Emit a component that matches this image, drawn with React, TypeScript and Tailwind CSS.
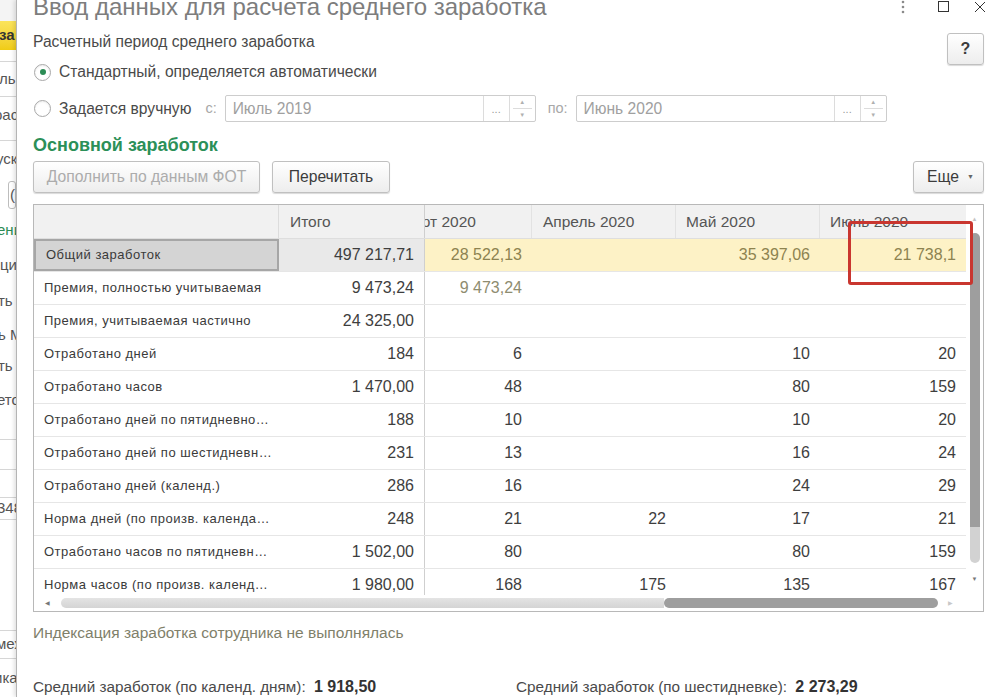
import React from 'react'

type Row = {
  label: string
  total: string
  mar: string
  apr: string
  may: string
  jun: string
}

const rows: Row[] = [
  { label: 'Общий заработок', total: '497 217,71', mar: '28 522,13', apr: '', may: '35 397,06', jun: '21 738,1' },
  { label: 'Премия, полностью учитываемая', total: '9 473,24', mar: '9 473,24', apr: '', may: '', jun: '' },
  { label: 'Премия, учитываемая частично', total: '24 325,00', mar: '', apr: '', may: '', jun: '' },
  { label: 'Отработано дней', total: '184', mar: '6', apr: '', may: '10', jun: '20' },
  { label: 'Отработано часов', total: '1 470,00', mar: '48', apr: '', may: '80', jun: '159' },
  { label: 'Отработано дней по пятидневно…', total: '188', mar: '10', apr: '', may: '10', jun: '20' },
  { label: 'Отработано дней по шестидневн…', total: '231', mar: '13', apr: '', may: '16', jun: '24' },
  { label: 'Отработано дней (календ.)', total: '286', mar: '16', apr: '', may: '24', jun: '29' },
  { label: 'Норма дней (по произв. календа…', total: '248', mar: '21', apr: '22', may: '17', jun: '21' },
  { label: 'Отработано часов по пятидневн…', total: '1 502,00', mar: '80', apr: '', may: '80', jun: '159' },
  { label: 'Норма часов (по произв. календ…', total: '1 980,00', mar: '168', apr: '175', may: '135', jun: '167' },
]

const cols = 'grid grid-cols-[245px_146px_107px_144px_144px_146px]'

function Radio({ checked }: { checked?: boolean }) {
  return (
    <span className="w-[17px] h-[17px] rounded-full border border-[#a8a8a8] bg-white flex items-center justify-center shadow-[inset_0_1px_2px_rgba(0,0,0,0.08)]">
      {checked && <span className="w-[6px] h-[6px] rounded-full bg-[#2c8c55]" />}
    </span>
  )
}

function PeriodInput({ value }: { value: string }) {
  return (
    <div className="flex h-[27px] w-[311px] border border-[#cdcdcd] rounded-[2px] bg-white">
      <div className="flex-1 flex items-center pl-[7px] text-[15.6px] text-[#a0a0a0]">{value}</div>
      <div className="w-[26px] border-l border-[#dcdcdc] flex items-end justify-center pb-[6px] text-[11px] leading-none text-[#9a9a9a]">...</div>
      <div className="w-[26px] border-l border-[#dcdcdc] flex flex-col">
        <div className="flex-1 flex items-center justify-center text-[6px] text-[#b0b0b0]">▲</div>
        <div className="h-px mx-[3px] bg-[#dcdcdc]" />
        <div className="flex-1 flex items-center justify-center text-[6px] text-[#b0b0b0]">▼</div>
      </div>
    </div>
  )
}

function Btn({ children, disabled, className }: { children: React.ReactNode; disabled?: boolean; className?: string }) {
  return (
    <div
      className={`h-[32px] flex items-center justify-center border border-[#c0c0c0] rounded-[3px] bg-gradient-to-b from-white to-[#ededed] shadow-[0_1px_1px_rgba(0,0,0,0.15)] text-[15.7px] ${
        disabled ? 'text-[#acacac]' : 'text-[#3c3c3c]'
      } ${className ?? ''}`}
    >
      {children}
    </div>
  )
}

function BackStrip() {
  return (
    <div className="w-[16px] shrink-0 overflow-hidden bg-white text-[15px] text-[#555] whitespace-nowrap flex flex-col">
      <div className="h-[21px] bg-[#f4f4f4]" />
      <div className="h-[29px] bg-gradient-to-b from-[#fbe45a] to-[#f0cc12] font-bold text-[#333] flex items-center -ml-[1px]">за</div>
      <div className="h-[12px] border-b border-[#d6d6d6]" />
      <div className="h-[35px] flex items-center -ml-[1px] border-b border-[#d6d6d6]">ль</div>
      <div className="h-[38px] flex items-center -ml-[6px]">рас</div>
      <div className="h-[6px] border-b border-[#d6d6d6]" />
      <div className="h-[38px] flex items-center -ml-[4px]">уск</div>
      <div className="h-[34px] flex items-center pl-[8px]">
        <div className="h-[28px] w-[20px] border border-[#bdbdbd] rounded-[3px] pl-[1px] flex items-center text-[#555]">(</div>
      </div>
      <div className="h-[36px] flex items-center -ml-[3px] text-[#2c8c55]">ени</div>
      <div className="h-[35px] flex items-center">ци</div>
      <div className="h-[36px] flex items-center -ml-[2px]">ть</div>
      <div className="h-[32px] flex items-center -ml-[2px]">ь М</div>
      <div className="h-[31px] flex items-center -ml-[2px]">ть :</div>
      <div className="h-[36px] flex items-center -ml-[3px]">ето</div>
      <div className="h-[22px] border-b border-[#d6d6d6]" />
      <div className="h-[30px] border-b border-[#d6d6d6]" />
      <div className="h-[28px] border-b border-[#d6d6d6]" />
      <div className="h-[22px] flex items-center -ml-[3px] border-b border-[#d6d6d6]">348</div>
      <div className="h-[112px] border-b border-[#d6d6d6]" />
      <div className="h-[28px] flex items-center -ml-[4px] border-b border-[#d6d6d6]">меж</div>
      <div className="h-[38px] flex items-center -ml-[6px]">ика</div>
      <div className="flex-1" />
    </div>
  )
}

export default function App() {
  return (
    <div className="w-[999px] h-[697px] overflow-hidden flex bg-white font-['Liberation_Sans',Arial,sans-serif] text-[#4a4a4a]">
      <BackStrip />
      <div className="flex-1 border-l border-[#b4b4b4] shadow-[-2px_0_4px_rgba(0,0,0,0.12)] pl-[16px] pr-[15px] flex flex-col">
        {/* title */}
        <div className="h-[20px] flex items-start justify-between">
          <div className="text-[24px] leading-[24px] -mt-[5px] text-[#7d7d7d] whitespace-nowrap">Ввод данных для расчета среднего заработка</div>
          <div className="flex items-start text-[#555] pt-[1px]">
            <svg width="4" height="14" viewBox="0 0 4 14" className="mr-[33px] -mt-[1px]">
              <circle cx="2" cy="2" r="1.3" fill="#8a8a8a" />
              <circle cx="2" cy="7" r="1.3" fill="#8a8a8a" />
              <circle cx="2" cy="12" r="1.3" fill="#8a8a8a" />
            </svg>
            <svg width="12" height="12" viewBox="0 0 12 12" className="mr-[24px]">
              <rect x="0.5" y="0.5" width="10" height="10" fill="none" stroke="#333" strokeWidth="1" />
            </svg>
            <svg width="12" height="12" viewBox="0 0 12 12" className="mr-[-2px]">
              <path d="M1 1 L11 11 M11 1 L1 11" stroke="#333" strokeWidth="1" />
            </svg>
          </div>
        </div>

        {/* period label + help */}
        <div className="mt-[13px] h-[18px] flex items-start justify-between">
          <div className="text-[15.6px] leading-[18px]">Расчетный период среднего заработка</div>
          <Btn className="w-[37px] font-bold text-[16px] shrink-0">?</Btn>
        </div>

        <div className="mt-[12px] h-[18px] flex items-center gap-[8px] pl-[1px]">
          <Radio checked />
          <span className="text-[15.6px]">Стандартный, определяется автоматически</span>
        </div>

        <div className="mt-[14px] h-[27px] flex items-center pl-[1px]">
          <Radio />
          <span className="text-[15.6px] ml-[8px]">Задается вручную</span>
          <span className="text-[14.5px] text-[#a8a8a8] ml-[14px] mr-[8px]">с:</span>
          <PeriodInput value="Июль 2019" />
          <span className="text-[14.5px] text-[#a8a8a8] ml-[12px] mr-[8px]">по:</span>
          <PeriodInput value="Июнь 2020" />
        </div>

        <div className="mt-[12px] h-[22px] text-[18px] leading-[22px] font-bold text-[#2b9058]">Основной заработок</div>

        <div className="mt-[5px] flex items-center">
          <Btn disabled className="w-[227px]">Дополнить по данным ФОТ</Btn>
          <Btn className="w-[118px] ml-[12px]">Перечитать</Btn>
          <div className="flex-1" />
          <Btn className="w-[71px] pl-[4px]">
            Еще <span className="text-[7px] ml-[8px] text-[#666]">▼</span>
          </Btn>
        </div>

        {/* table */}
        <div className="mt-[11px] relative border border-[#b8b8b8] h-[408px] flex flex-col">
          <div className="flex h-[390px]">
            <div className="w-[932px] flex flex-col">
              <div className={`${cols} h-[34px] bg-[#f1f1f1] border-b border-[#dedede] text-[15.5px] text-[#555]`}>
                <div className="border-r border-[#dcdcdc]" />
                <div className="flex items-center pl-[11px] border-r border-[#cfcfcf]">Итого</div>
                <div className="flex items-center overflow-hidden border-r border-[#e2e2e2]">
                  <span className="-ml-[25px] whitespace-nowrap">Март 2020</span>
                </div>
                <div className="flex items-center pl-[11px] border-r border-[#e2e2e2]">Апрель 2020</div>
                <div className="flex items-center pl-[10px] border-r border-[#e2e2e2]">Май 2020</div>
                <div className="flex items-center pl-[10px]">Июнь 2020</div>
              </div>
              <div className="flex-1 overflow-hidden">
                {rows.map((r, i) => {
                  const first = i === 0
                  const val = 'flex items-center justify-end pr-[10px] text-[16px]'
                  const hl = first ? 'bg-[#fdf2c6] text-[#8d8350]' : 'text-[#3e3e3e]'
                  return (
                    <div key={i} className={`${cols} h-[33px] border-b border-[#e6e6e6]`}>
                      <div
                        className={`flex items-center pl-[10px] text-[13px] tracking-[0.5px] whitespace-nowrap overflow-hidden ${
                          first ? 'bg-[#d4d4d4] border-2 border-[#a6a6a6] text-[#3a3a3a]' : 'text-[#3a3a3a]'
                        }`}
                      >
                        {r.label}
                      </div>
                      <div className={`${val} border-r border-[#cfcfcf] ${first ? 'bg-[#e9e9e9] text-[#3e3e3e]' : 'text-[#3e3e3e]'}`}>{r.total}</div>
                      <div className={`${val} ${first ? hl : i === 1 ? 'text-[#8e8c70]' : 'text-[#3e3e3e]'}`}>{r.mar}</div>
                      <div className={`${val} ${hl}`}>{r.apr}</div>
                      <div className={`${val} ${hl}`}>{r.may}</div>
                      <div className={`${val} ${hl}`}>{r.jun}</div>
                    </div>
                  )
                })}
              </div>
            </div>
            {/* vertical scrollbar */}
            <div className="flex-1 flex flex-col items-center">
              <div className="h-[28px] flex items-center text-[6px] text-[#c4c4c4]">▲</div>
              <div className="w-[10px] h-[294px] rounded-t-[5px] bg-[#9e9e9e]" />
              <div className="w-[10px] h-[36px] rounded-b-[5px] bg-[#d2d2d2]" />
              <div className="flex-1 flex items-center text-[6px] text-[#777]">▼</div>
            </div>
          </div>
          {/* horizontal scrollbar */}
          <div className="flex-1 flex items-center pl-[11px]">
            <span className="text-[6px] text-[#777] w-[16px]">◀</span>
            <div className="w-[603px] h-[10px] rounded-l-[5px] bg-gradient-to-b from-[#e4e4e4] to-[#d4d4d4]" />
            <div className="w-[274px] h-[10px] rounded-[5px] bg-[#9e9e9e]" />
            <span className="text-[6px] text-[#c8c8c8] ml-[10px]">▶</span>
          </div>
          {/* red highlight */}
          <div className="absolute left-[814px] top-[16px] w-[125px] h-[64px] border-[3px] border-[#c9362f] rounded-[3px]" />
        </div>

        <div className="mt-[12px] text-[15.5px] leading-[18px] text-[#80806a]">Индексация заработка сотрудника не выполнялась</div>

        <div className="mt-[36px] flex text-[15.3px] leading-[18px] whitespace-nowrap">
          <div className="w-[483px]">
            Средний заработок (по календ. дням): <span className="font-bold text-[16px] text-[#333] ml-[4px]">1 918,50</span>
          </div>
          <div>
            Средний заработок (по шестидневке): <span className="font-bold text-[16px] text-[#333] ml-[4px]">2 273,29</span>
          </div>
        </div>
      </div>
    </div>
  )
}
